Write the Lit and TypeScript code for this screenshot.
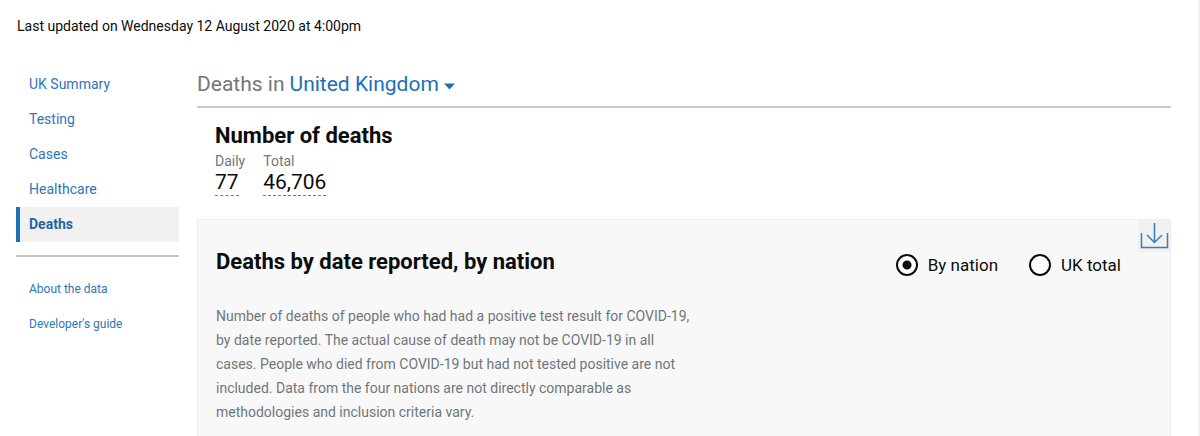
import { LitElement, html, css } from "lit";
import { customElement, state } from "lit/decorators.js";

interface NavItem {
  label: string;
  href: string;
}

const SECTIONS: NavItem[] = [
  { label: "UK Summary", href: "#summary" },
  { label: "Testing", href: "#testing" },
  { label: "Cases", href: "#cases" },
  { label: "Healthcare", href: "#healthcare" },
  { label: "Deaths", href: "#deaths" },
];

const RESOURCES: NavItem[] = [
  { label: "About the data", href: "#about" },
  { label: "Developer's guide", href: "#developers" },
];

const FIGURES = [
  { label: "Daily", value: "77" },
  { label: "Total", value: "46,706" },
];

@customElement("side-nav")
export class SideNav extends LitElement {
  static styles = css`
    :host {
      display: block;
    }
    .list {
      list-style: none;
      margin: 0;
      padding: 0;
    }
    .resources {
      margin-top: 13px;
      padding-top: 15px;
      border-top: 2px solid #c6c6c6;
    }
    .link {
      display: block;
      border-left: 4px solid transparent;
      padding-left: 9px;
      font-size: 14px;
      line-height: 35px;
      color: #2f76b8;
      text-decoration: none;
    }
    .small {
      font-size: 12px;
    }
    .current {
      background: #f2f1f0;
      background-clip: padding-box;
      border-left-color: #1d70b8;
      color: #1d66aa;
      font-weight: 700;
    }
  `;

  render() {
    return html`
      <nav aria-label="Sections">
        <ul class="list">
          ${SECTIONS.map((item) =>
            item.label === "Deaths"
              ? html`<li><a class="link current" href=${item.href} aria-current="page">${item.label}</a></li>`
              : html`<li><a class="link" href=${item.href}>${item.label}</a></li>`
          )}
        </ul>
        <ul class="list resources">
          ${RESOURCES.map(
            (item) => html`<li><a class="link small" href=${item.href}>${item.label}</a></li>`
          )}
        </ul>
      </nav>
    `;
  }
}

@customElement("deaths-card")
export class DeathsCard extends LitElement {
  static styles = css`
    :host {
      display: block;
      position: relative;
      border: 1px solid #eeeeee;
      background: #f8f8f8;
      padding: 28px 49px 40px 18px;
    }
    .head {
      display: flex;
      justify-content: space-between;
      align-items: flex-start;
    }
    .title {
      margin: 0;
      font-size: 22px;
      line-height: 28px;
      font-weight: 700;
      color: #0b0c0c;
    }
    .views {
      display: flex;
      gap: 31px;
      margin: 5px 0 0;
      padding: 0;
      border: 0;
    }
    .option {
      display: flex;
      align-items: center;
      gap: 10px;
      font-size: 17px;
      line-height: 24px;
      color: #0b0c0c;
    }
    .radio {
      appearance: none;
      box-sizing: border-box;
      width: 22px;
      height: 22px;
      margin: 0;
      border: 2px solid #0b0c0c;
      border-radius: 50%;
      background: #ffffff;
    }
    .radio:checked {
      background: radial-gradient(circle, #0b0c0c 4px, #ffffff 5px);
    }
    .intro {
      max-width: 480px;
      margin: 27px 0 0;
      font-size: 14px;
      line-height: 24px;
      color: #6f777b;
    }
    .download {
      position: absolute;
      top: 0;
      right: 0;
      width: 32px;
      height: 32px;
      padding: 0;
      border: 0;
      background: #f1f1f1;
    }
    .icon {
      display: block;
    }
  `;

  @state() private view = "nation";

  private option(id: string, label: string) {
    return html`
      <label class="option" for=${id}>
        <input
          class="radio"
          type="radio"
          name="view"
          id=${id}
          .checked=${this.view === id}
          @change=${() => (this.view = id)}
        />
        ${label}
      </label>
    `;
  }

  render() {
    return html`
      <div class="head">
        <h3 class="title">Deaths by date reported, by nation</h3>
        <div class="views" role="radiogroup">
          ${this.option("nation", "By nation")} ${this.option("total", "UK total")}
        </div>
      </div>
      <p class="intro">
        Number of deaths of people who had had a positive test result for COVID-19, by date
        reported. The actual cause of death may not be COVID-19 in all cases. People who died from
        COVID-19 but had not tested positive are not included. Data from the four nations are not
        directly comparable as methodologies and inclusion criteria vary.
      </p>
      <button class="download" type="button" aria-label="Download">
        <svg class="icon" width="32" height="32" viewBox="0 0 32 32" fill="none" stroke="#3c7dbb" stroke-width="1.5">
          <path d="M3.5 13V27.5H29.5V13" />
          <path d="M16.5 3V23M9 15L16.5 22.5L24 15" />
        </svg>
      </button>
    `;
  }
}

@customElement("app-root")
export class AppRoot extends LitElement {
  static styles = css`
    :host {
      display: block;
      box-sizing: border-box;
      height: 100vh;
      overflow: hidden;
      padding: 16px 27px 0 16px;
      border-right: 2px solid #f1f1f1;
      background: #ffffff;
      font-family: Roboto, "Liberation Sans", sans-serif;
      color: #0b0c0c;
    }
    .updated {
      margin: 0 0 31px;
      padding-left: 1px;
      font-size: 14px;
      line-height: 20px;
    }
    .layout {
      display: grid;
      grid-template-columns: 163px minmax(0, 1fr);
      gap: 18px;
    }
    .area {
      display: flex;
      align-items: center;
      gap: 5px;
      padding-bottom: 5px;
      border-bottom: 2px solid #cbcbcb;
      font-size: 21px;
      line-height: 34px;
      color: #6f777b;
    }
    .picker {
      display: flex;
      align-items: center;
      gap: 4px;
    }
    .select {
      appearance: none;
      padding: 0;
      border: 0;
      background: transparent;
      font: inherit;
      color: #1d70b8;
    }
    .caret {
      display: block;
      margin-top: 4px;
    }
    .summary {
      padding: 14px 18px 23px;
    }
    .heading {
      margin: 0;
      font-size: 22px;
      line-height: 28px;
      font-weight: 700;
    }
    .figures {
      display: flex;
      gap: 18px;
      margin: 2px 0 0;
    }
    .label {
      font-size: 14px;
      line-height: 18px;
      color: #6f777b;
    }
    .value {
      width: max-content;
      margin: 0;
      border-bottom: 1px dashed #6f777b;
      font-size: 21px;
      line-height: 25px;
    }
  `;

  render() {
    return html`
      <p class="updated">Last updated on Wednesday 12 August 2020 at 4:00pm</p>
      <div class="layout">
        <side-nav></side-nav>
        <main>
          <div class="area">
            <label for="area">Deaths in</label>
            <div class="picker">
              <select class="select" id="area">
                <option>United Kingdom</option>
              </select>
              <svg class="caret" width="11" height="7" viewBox="0 0 11 7" fill="#1d70b8">
                <path d="M0 0.5H11L5.5 6.5Z" />
              </svg>
            </div>
          </div>
          <section class="summary">
            <h2 class="heading">Number of deaths</h2>
            <dl class="figures">
              ${FIGURES.map(
                (f) => html`<div>
                  <dt class="label">${f.label}</dt>
                  <dd class="value">${f.value}</dd>
                </div>`
              )}
            </dl>
          </section>
          <deaths-card></deaths-card>
        </main>
      </div>
    `;
  }
}
